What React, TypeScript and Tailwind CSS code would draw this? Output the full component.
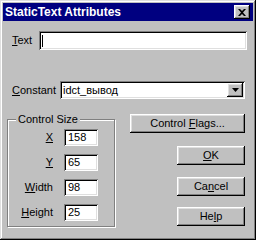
import React from "react";

const raised =
  "shadow-[inset_-1px_-1px_#000,inset_1px_1px_#fff,inset_-2px_-2px_#808080,inset_2px_2px_#dfdfdf]";
const sunken =
  "shadow-[inset_1px_1px_#808080,inset_-1px_-1px_#fff,inset_2px_2px_#000,inset_-2px_-2px_#dfdfdf]";

function Field({ value, className = "" }: { value: string; className?: string }) {
  return (
    <div className={`bg-white ${sunken} flex items-center pl-[4px] text-black ${className}`}>
      {value}
    </div>
  );
}

function Btn({ children, className = "" }: { children: React.ReactNode; className?: string }) {
  return (
    <div className={`bg-[#c0c0c0] ${raised} flex items-center justify-center h-[19px] text-black ${className}`}>
      <span className="whitespace-pre">{children}</span>
    </div>
  );
}

function SizeRow({ label, value }: { label: React.ReactNode; value: string }) {
  return (
    <div className="flex items-center h-[17px]">
      <div className="w-[45px] text-right">{label}</div>
      <Field value={value} className="ml-[11px] w-[34px] h-[17px]" />
    </div>
  );
}

export default function App() {
  return (
    <div
      className="relative w-[256px] h-[240px] bg-[#c0c0c0] p-[3px] flex flex-col text-[11px] leading-none text-black shadow-[inset_-1px_-1px_#000,inset_1px_1px_#dfdfdf,inset_-2px_-2px_#808080,inset_2px_2px_#fff]"
      style={{ fontFamily: '"Liberation Sans", Arial, sans-serif' }}
    >
      {/* title bar */}
      <div className="h-[18px] bg-[#000080] flex items-center pl-[2px] pr-[3px]">
        <span className="text-white font-bold text-[12px]">StaticText Attributes</span>
        <div className={`ml-auto w-[16px] h-[14px] bg-[#c0c0c0] ${raised} flex items-center justify-center`}>
          <svg width="8" height="7" viewBox="0 0 8 7">
            <path d="M0 0h2l2 2 2-2h2L5 3.5 8 7H6L4 5 2 7H0l3-3.5z" fill="#000" />
          </svg>
        </div>
      </div>

      {/* Text row */}
      <div className="flex items-center mt-[10px] h-[19px]">
        <span className="ml-[9px] w-[27px]"><u>T</u>ext</span>
        <div className={`bg-white ${sunken} w-[208px] h-[19px] flex items-center pl-[3px]`}>
          <div className="w-[1px] h-[12px] bg-black" />
        </div>
      </div>

      {/* Constant row */}
      <div className="flex items-center mt-[31px] h-[18px]">
        <span className="ml-[9px] w-[48px]"><u>C</u>onstant</span>
        <div className={`bg-white ${sunken} w-[185px] h-[18px] flex items-center pl-[3px] pr-[2px]`}>
          <span>idct_вывод</span>
          <div className={`ml-auto w-[16px] h-[14px] bg-[#c0c0c0] ${raised} flex items-center justify-center`}>
            <svg width="7" height="4" viewBox="0 0 7 4">
              <path d="M0 0h7L3.5 4z" fill="#000" />
            </svg>
          </div>
        </div>
      </div>

      {/* bottom area */}
      <div className="flex mt-[15px]">
        <div className="relative ml-[4px] mt-[5px] w-[108px] h-[108px] border border-[#808080] shadow-[1px_1px_#fff,inset_1px_1px_#fff]">
          <span className="absolute left-[8px] top-[-6px] bg-[#c0c0c0] px-[2px]">Control Size</span>
          <div className="flex flex-col gap-[8px] pt-[9px]">
            <SizeRow label={<u>X</u>} value="158" />
            <SizeRow label={<u>Y</u>} value="65" />
            <SizeRow label={<><u>W</u>idth</>} value="98" />
            <SizeRow label={<><u>H</u>eight</>} value="25" />
          </div>
        </div>
        <div className="ml-[15px] w-[115px] flex flex-col items-end">
          <Btn className="w-[115px]">Control <u>F</u>lags...</Btn>
          <Btn className="w-[68px] mt-[13px]"><u>O</u>K</Btn>
          <Btn className="w-[68px] mt-[12px]">Ca<u>n</u>cel</Btn>
          <Btn className="w-[68px] mt-[11px]">He<u>l</u>p</Btn>
        </div>
      </div>
    </div>
  );
}
